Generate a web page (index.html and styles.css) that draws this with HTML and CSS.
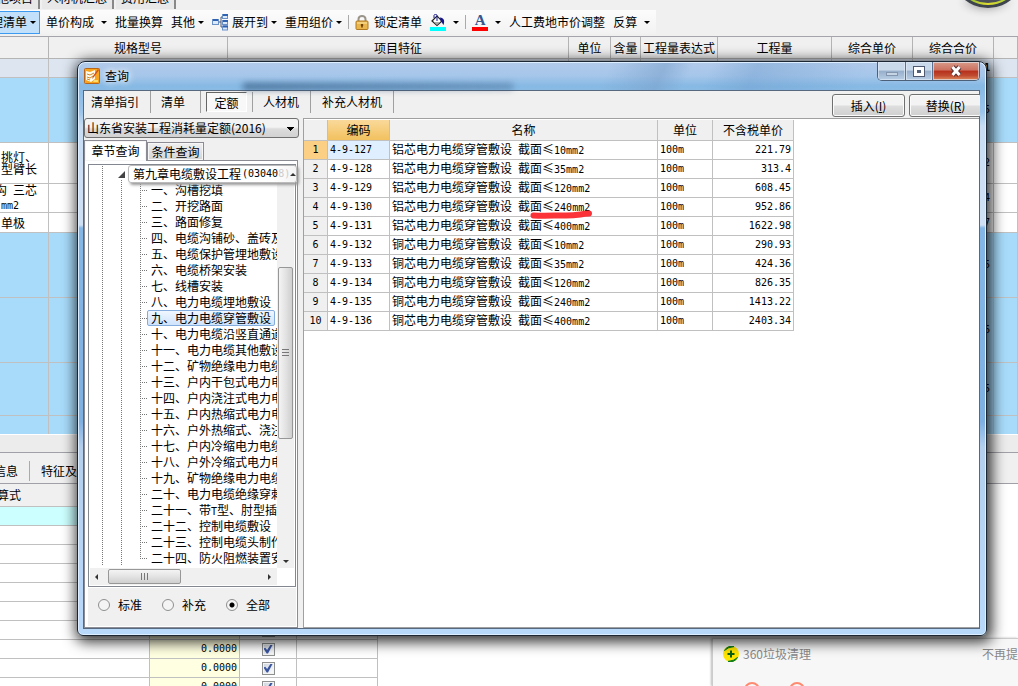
FILE: index.html
```html
<!DOCTYPE html>
<html lang="zh-CN">
<head>
<meta charset="utf-8">
<title>查询</title>
<link rel="stylesheet" href="styles.css">
</head>
<body>
<main class="app">
  <nav class="app-tabs">
    <button class="app-tab">其他项目</button>
    <button class="app-tab">人材机汇总</button>
    <button class="app-tab">费用汇总</button>
  </nav>
  <div class="toolbar">
    <button class="tool tool-on">整理清单<i class="caret"></i></button>
    <button class="tool wide">单价构成<i class="caret"></i></button>
    <button class="tool">批量换算</button>
    <button class="tool">其他<i class="caret"></i></button>
    <button class="tool">
      <svg width="17" height="17" viewBox="0 0 17 17"><path d="M5 8h4M9 3v10M9 3h2M9 13h2" stroke="#556" fill="none"/><g fill="#dbe9fb" stroke="#6a90c8"><rect x=".5" y="5.500" width="6" height="5"/><rect x="10.500" y=".5" width="5" height="4"/><rect x="10.500" y="6.500" width="5" height="4"/><rect x="10.500" y="12" width="5" height="4"/></g><path d="M1 6h5M11 1h5M11 7h5M11 12.500h5" stroke="#2f62b0" stroke-width="2"/></svg>
      展开到<i class="caret"></i></button>
    <button class="tool">重用组价<i class="caret"></i></button>
    <span class="sep"></span>
    <button class="tool lock">
      <svg width="14" height="15" viewBox="0 0 14 15"><path d="M3.500 7V4a3.500 3 0 0 1 7 0v3" fill="none" stroke="#9a9488" stroke-width="2"/><rect x="1" y="6" width="12" height="8.500" rx="1" fill="#e9b54d" stroke="#b07a20"/><path d="M2 8h10" stroke="#ffe9a8"/><path d="M7 9v3.500M5.800 10h2.400" stroke="#6a3d00" stroke-width="1.500"/></svg>
      锁定清单</button>
    <button class="tool wide" aria-label="填充颜色">
      <svg width="16" height="17" viewBox="0 0 16 17"><path d="M2 7l5-5 5 5-5 4.500z" fill="#fff" stroke="#222" stroke-width="1.200"/><path d="M7 7V1.500c0-1.500-3-1.500-3 0V4" fill="none" stroke="#14148c"/><path d="M10 3.500c4 .5 5 3 3.500 7.500-1-1-1.500-3-3-4.500z" fill="#14148c"/><path d="M4 8h6l-3 3z" fill="#aaa"/><rect y="13" width="16" height="4" fill="#00ffff"/></svg><i class="caret"></i></button>
    <span class="sep"></span>
    <button class="tool wide" aria-label="字体颜色"><span class="font-a">A</span><i class="caret"></i></button>
    <button class="tool">人工费地市价调整</button>
    <button class="tool wide">反算<i class="caret"></i></button>
  </div>

  <table class="main-grid">
    <colgroup><col class="w-a"><col class="w-b"><col class="w-c"><col class="w-d"><col class="w-e"><col class="w-f"><col class="w-g"><col class="w-h"><col class="w-h"><col></colgroup>
    <thead><tr><th></th><th>规格型号</th><th>项目特征</th><th>单位</th><th>含量</th><th>工程量表达式</th><th>工程量</th><th>综合单价</th><th>综合合价</th><th></th></tr></thead>
    <tbody>
      <tr class="r19 total"><td></td><td></td><td></td><td></td><td></td><td></td><td></td><td></td><td class="amt">1</td><td></td></tr>
      <tr class="r65 blue"><td></td><td></td><td></td><td></td><td></td><td></td><td></td><td></td><td class="amt">5</td><td></td></tr>
      <tr class="r41"><td class="desc">挑灯、<br>型臂长</td><td></td><td></td><td></td><td></td><td></td><td></td><td></td><td class="amt">2</td><td></td></tr>
      <tr class="r29"><td class="desc cut">沟<span class="num"> </span>三芯<br><span class="num">mm2</span></td><td></td><td></td><td></td><td></td><td></td><td></td><td></td><td class="amt">4</td><td></td></tr>
      <tr class="r20"><td class="desc">单极</td><td></td><td></td><td></td><td></td><td></td><td></td><td></td><td class="amt">7</td><td></td></tr>
      <tr class="r65 blue"><td></td><td></td><td></td><td></td><td></td><td></td><td></td><td></td><td class="amt">5</td><td></td></tr>
      <tr class="r65 blue"><td></td><td></td><td></td><td></td><td></td><td></td><td></td><td></td><td class="amt">6</td><td></td></tr>
      <tr class="r53 blue"><td></td><td></td><td></td><td></td><td></td><td></td><td></td><td></td><td class="amt">5</td><td></td></tr>
      <tr class="r18 blue"><td></td><td></td><td></td><td></td><td></td><td></td><td></td><td></td><td></td><td></td></tr>
    </tbody>
  </table>
  <div class="splitter"></div>
  <nav class="detail-tabs"><button>信息</button><span class="sep"></span><button>特征及内容</button></nav>
  <table class="detail-grid">
    <thead><tr><th>算式</th><th></th><th></th><th></th></tr></thead>
    <tbody>
      <tr class="cyan"><td></td><td></td><td></td><td></td></tr>
      <tr><td></td><td></td><td></td><td></td></tr>
      <tr><td></td><td></td><td></td><td></td></tr>
      <tr><td></td><td></td><td></td><td></td></tr>
      <tr><td></td><td></td><td></td><td></td></tr>
      <tr><td></td><td></td><td></td><td></td></tr>
      <tr><td></td><td>0.0000</td><td><input type="checkbox" checked aria-label="计取"></td><td></td></tr>
      <tr><td></td><td>0.0000</td><td><input type="checkbox" checked aria-label="计取"></td><td></td></tr>
      <tr><td></td><td>0.0000</td><td><input type="checkbox" checked aria-label="计取"></td><td></td></tr>
      <tr><td></td><td>0.0000</td><td><input type="checkbox" checked aria-label="计取"></td><td></td></tr>
    </tbody>
  </table>
</main>

<svg class="gauge" width="100" height="24" viewBox="0 0 100 24"><defs><linearGradient id="g"><stop offset="0" stop-color="#5fae3a"/><stop offset=".5" stop-color="#e0dc30"/><stop offset="1" stop-color="#7fc040"/></linearGradient></defs><circle cx="50" cy="-29" r="37" fill="#3d444e"/><circle cx="50" cy="-29" r="33" fill="#4b5058" stroke="url(#g)" stroke-width="2"/></svg>

<aside class="cleaner">
  <svg width="16" height="16" viewBox="0 0 16 16"><circle cx="8" cy="8" r="8" fill="#ffe600"/><path d="M1.500 4.500A8 8 0 0 1 11 .6Q5 1 1.500 4.500zM14.500 11.500A8 8 0 0 1 5 15.400Q11 15 14.500 11.500z" fill="#0b7d20" stroke="#0b7d20"/><path d="M8 4.500v7M4.500 8h7" stroke="#075f16" stroke-width="2"/></svg>
  <span class="cleaner-name">360垃圾清理</span>
  <a class="cleaner-link" href="#">不再提醒</a>
  <svg class="cleaner-num" width="64" height="16" viewBox="0 0 64 16"><g fill="none" stroke="#ff8a70" stroke-width="2"><circle cx="8" cy="8" r="7"/><circle cx="53" cy="8" r="7"/></g></svg>
</aside>

<section class="dialog" role="dialog" aria-labelledby="dlg-title">
  <header class="titlebar">
    <span class="ghost"></span>
    <svg width="16" height="16" viewBox="0 0 16 16"><rect x=".5" y=".5" width="15" height="15" rx="1" fill="#f7a51c" stroke="#b8641a"/><path d="M2 3l4 1 5-2v9l-4 3-5-2z" fill="#fffbe8"/><path d="M3 6l3 1 4-2M3 9l3 1 3-2M3 11l3 1" stroke="#c88a30" fill="none"/><path d="M14 1L9 8l-1 3 2-2 5-7z" fill="#d0501c"/><path d="M10 12h4v2h-5z" fill="#ffdc70"/></svg>
    <h1 id="dlg-title">查询</h1>
    <div class="win-btns">
      <button class="min" aria-label="最小化"><i></i></button>
      <button class="max" aria-label="最大化"><i></i></button>
      <button class="close" aria-label="关闭"><svg width="14" height="12" viewBox="0 0 14 12"><path d="M3.500 2l7 8M10.500 2l-7 8" stroke="#5a3030" stroke-width="5"/><path d="M3.500 2l7 8M10.500 2l-7 8" stroke="#fff" stroke-width="3"/></svg></button>
    </div>
  </header>
  <div class="client">
    <div class="top">
      <nav class="kinds">
        <button>清单指引</button><button class="roomy">清单</button><button class="on">定额</button><button>人材机</button><button>补充人材机</button>
      </nav>
      <div class="actions">
        <button class="btn">插入(<u>I</u>)</button>
        <button class="btn last">替换(<u>R</u>)</button>
      </div>
    </div>
    <div class="body">
      <div class="side">
        <select class="lib" aria-label="定额库"><option>山东省安装工程消耗量定额(2016)</option></select>
        <nav class="side-tabs"><button class="on">章节查询</button><button>条件查询</button></nav>
        <div class="side-panel">
          <div class="tree-box">
            <div class="tree-row">
              <div class="tree">
                <div class="root"><i class="tri"></i></div>
                <ul>
                  <li>一、沟槽挖填</li><li>二、开挖路面</li><li>三、路面修复</li><li>四、电缆沟铺砂、盖砖及移动盖板</li><li>五、电缆保护管埋地敷设</li><li>六、电缆桥架安装</li><li>七、线槽安装</li><li>八、电力电缆埋地敷设</li><li><span class="sel">九、电力电缆穿管敷设</span></li><li>十、电力电缆沿竖直通道敷设</li><li>十一、电力电缆其他敷设</li><li>十二、矿物绝缘电力电缆敷设</li><li>十三、户内干包式电力电缆头</li><li>十四、户内浇注式电力电缆头</li><li>十五、户内热缩式电力电缆头</li><li>十六、户外热缩式、浇注式</li><li>十七、户内冷缩电力电缆头</li><li>十八、户外冷缩式电力电缆头</li><li>十九、矿物绝缘电力电缆头</li><li>二十、电力电缆绝缘穿刺线夹</li><li>二十一、带<span class="num">T</span>型、肘型插头</li><li>二十二、控制电缆敷设</li><li>二十三、控制电缆头制作</li><li>二十四、防火阻燃装置安装</li>
                </ul>
              </div>
              <div class="vbar"><i class="up"></i><span class="vthumb"></span><i class="down"></i></div>
            </div>
            <div class="hbar"><i class="left"></i><span class="hthumb"></span><i class="right"></i></div>
            <div class="tip">第九章电缆敷设工程<span class="num code">(03040<span class="faint">8)</span></span><i class="up"></i></div>
          </div>
          <div class="scope">
            <label><input type="radio" name="scope">标准</label>
            <label><input type="radio" name="scope">补充</label>
            <label><input type="radio" name="scope" checked>全部</label>
          </div>
        </div>
      </div>
      <div class="result">
        <table class="quota">
          <colgroup><col class="q-n"><col class="q-code"><col class="q-name"><col class="q-unit"><col class="q-price"></colgroup>
          <thead><tr><th></th><th class="hot">编码</th><th>名称</th><th>单位</th><th>不含税单价</th></tr></thead>
          <tbody>
            <tr class="cur"><th>1</th><td>4-9-127</td><td class="name">铝芯电力电缆穿管敷设<span class="num"> </span>截面≤<span class="num">10mm2</span></td><td>100m</td><td>221.79</td></tr>
            <tr><th>2</th><td>4-9-128</td><td class="name">铝芯电力电缆穿管敷设<span class="num"> </span>截面≤<span class="num">35mm2</span></td><td>100m</td><td>313.4</td></tr>
            <tr><th>3</th><td>4-9-129</td><td class="name">铝芯电力电缆穿管敷设<span class="num"> </span>截面≤<span class="num">120mm2</span></td><td>100m</td><td>608.45</td></tr>
            <tr><th>4</th><td>4-9-130</td><td class="name">铝芯电力电缆穿管敷设<span class="num"> </span>截<span class="marked">面≤<span class="num">240mm2</span><svg class="mark" viewBox="0 0 63 9" preserveAspectRatio="none"><path d="M3.500 5.500C14 6 24 5.500 36 5.500S50 4 59 3.500" fill="none" stroke="#fb3238" stroke-width="6" stroke-linecap="round"/></svg></span></td><td>100m</td><td>952.86</td></tr>
            <tr><th>5</th><td>4-9-131</td><td class="name">铝芯电力电缆穿管敷设<span class="num"> </span>截面≤<span class="num">400mm2</span></td><td>100m</td><td>1622.98</td></tr>
            <tr><th>6</th><td>4-9-132</td><td class="name">铜芯电力电缆穿管敷设<span class="num"> </span>截面≤<span class="num">10mm2</span></td><td>100m</td><td>290.93</td></tr>
            <tr><th>7</th><td>4-9-133</td><td class="name">铜芯电力电缆穿管敷设<span class="num"> </span>截面≤<span class="num">35mm2</span></td><td>100m</td><td>424.36</td></tr>
            <tr><th>8</th><td>4-9-134</td><td class="name">铜芯电力电缆穿管敷设<span class="num"> </span>截面≤<span class="num">120mm2</span></td><td>100m</td><td>826.35</td></tr>
            <tr><th>9</th><td>4-9-135</td><td class="name">铜芯电力电缆穿管敷设<span class="num"> </span>截面≤<span class="num">240mm2</span></td><td>100m</td><td>1413.22</td></tr>
            <tr><th>10</th><td>4-9-136</td><td class="name">铜芯电力电缆穿管敷设<span class="num"> </span>截面≤<span class="num">400mm2</span></td><td>100m</td><td>2403.34</td></tr>
          </tbody>
        </table>
      </div>
    </div>
  </div>
</section>
</body>
</html>
```
FILE: styles.css
```css
* { box-sizing: border-box; }
html, body { height: 100%; }
body {
  margin: 0;
  position: relative;
  overflow: hidden;
  background: #fff;
  color: #000;
  font: 12px/16px "Noto Sans CJK SC", sans-serif;
}
button, select, input { font: inherit; color: inherit; margin: 0; padding: 0; }
button { background: none; border: 0; white-space: nowrap; }
svg { display: block; flex: none; }
.num { font-family: "DejaVu Sans Mono", monospace; font-size: 10px; white-space: pre; }
.sep { width: 1px; height: 14px; background: #aaa; flex: none; }

/* application behind the dialog */
.app { height: 100%; overflow: hidden; display: flex; flex-direction: column; }
.app > * { flex: none; }
.app-tabs { display: flex; height: 10px; background: #f0f0f0; overflow: hidden; }
.app-tab { height: 9px; padding: 0 5px 3px; display: flex; align-items: flex-end; justify-content: center; margin-right: 2px; border-right: 2px solid #888; background: #e8e8e8; }
.app-tab:first-child { margin-left: -20px; }
.toolbar {
  display: flex; align-items: center; gap: 8px; height: 27px; padding-bottom: 2px;
  border-bottom: 1px solid #a4a4ac;
  background: linear-gradient(#fcfcfc, #f2f2f2) 0 0 / 656px 24px no-repeat, #f0f0f0;
}
.tool { display: flex; align-items: center; gap: 3px; height: 23px; }
.tool.wide { gap: 7px; }
.tool.lock { gap: 5px; }
.tool-on { margin: 0 -2px 0 -26px; padding: 0 3px 0 4px; border: 1px solid #3c9bf0; background: #c3e0fb; }
.toolbar .sep { margin: 0 -2px; }
.caret { border: 3px solid transparent; border-top-color: #000; border-bottom: 0; }
.font-a { width: 16px; height: 17px; border-bottom: 4px solid #f00; font: bold 15px/13px "Liberation Serif", serif; color: #34568f; text-align: center; }

table { border-collapse: separate; border-spacing: 0; table-layout: fixed; }
th { font-weight: 400; }
th, td { padding: 0; white-space: nowrap; overflow: hidden; border: solid #c0c0c0; border-width: 0 1px 1px 0; }
.main-grid { width: 100%; }
.w-a { width: 49px; } .w-b { width: 179px; } .w-c { width: 341px; } .w-d { width: 42px; }
.w-e { width: 30px; } .w-f { width: 77px; } .w-g { width: 114px; } .w-h { width: 81px; }
.main-grid th { height: 22px; background: #f0f0f0; border-color: #b4b4b4; line-height: 16px; }
.r18 td { height: 18px; border-bottom: 0; }
.r19 td { height: 19px; } .r20 td { height: 20px; } .r29 td { height: 29px; }
.r41 td { height: 41px; } .r53 td { height: 53px; } .r65 td { height: 65px; }
.total td { background: #dde5f0; }
.total .amt { font-weight: 700; }
.blue td { background: #a8dbfa; }
.desc { padding-left: 1px; line-height: 12px; }
.desc.cut { text-indent: -6px; }
.desc.cut .num { line-height: 12px; }
.amt { text-align: right; padding-right: 3px; font-family: "DejaVu Sans Mono", monospace; font-size: 10px; }
.splitter { height: 19px; background: #ececec; border-top: 1px solid #fff; border-bottom: 1px solid #a0a0a8; }
.detail-tabs { display: flex; align-items: center; gap: 11px; height: 31px; padding-top: 5px; background: #f0f0f0; border-bottom: 1px solid #a0a0a8; }
.detail-tabs button:first-child { margin-left: -6px; }
.detail-tabs .sep { height: 20px; }
.detail-grid { width: 378px; }
.detail-grid th:first-child { width: 150px; text-align: left; text-indent: -3px; }
.detail-grid th:nth-child(2) { width: 90px; }
.detail-grid th:nth-child(3) { width: 57px; }
.detail-grid th { height: 23px; background: #f0f0f0; }
.detail-grid td { height: 19px; line-height: 16px; }
.detail-grid td:nth-child(2) { background: #ffffe1; text-align: right; padding-right: 2px; font-family: "DejaVu Sans Mono", monospace; font-size: 10px; }
.detail-grid td:nth-child(3) { text-align: center; }
.detail-grid .cyan td { background: #ccffff; }
.detail-grid input { appearance: none; display: block; width: 13px; height: 13px; margin: 0 auto; border: 1px solid #8e8f8f; background: linear-gradient(135deg, #ccd3dc, #fff); box-shadow: inset 0 0 0 1px #f4f4f4; }
.detail-grid input::before { content: ""; display: block; width: 9px; height: 9px; margin: 1px; background: #3a55a0; clip-path: polygon(0 45%, 20% 35%, 40% 60%, 80% 0, 100% 5%, 50% 100%, 35% 100%); }

.gauge { position: absolute; top: 0; right: -20px; filter: drop-shadow(-2px 0 5px #888); }
.cleaner {
  position: absolute; left: 712px; right: 0; bottom: 0; height: 48px;
  display: grid; grid-template-columns: 16px auto 1fr; column-gap: 4px; align-content: start;
  padding: 7px 0 0 10px; overflow: hidden;
  background: #f7f7f7; border: solid #ccc; border-width: 1px 0 0 1px; box-shadow: -1px 0 2px #bbb; color: #888;
}
.cleaner-link { justify-self: end; margin-right: -12px; color: #888; text-decoration: none; }
.cleaner-num { grid-column: 1 / -1; margin: 20px 0 0 21px; }

/* dialog */
.dialog {
  position: absolute; left: 77px; right: 31px; top: 61px; bottom: 50px;
  display: flex; flex-direction: column; padding: 0 6px 6px 5px;
  border: 1px solid #1c2733; border-radius: 8px 8px 6px 6px;
  background: linear-gradient(#b2caea 0, #a5c6ea 14px, #86b9e4 24px, #9cc4ea 50px, #c8ddf4 64px, #cfe0f4 163px, #84b6e6 166px, #7fb0e2 360px, #b4cfee 385px, #b9d9fb 100%);
  box-shadow: inset 0 0 0 1px #dceeff, 2px 3px 14px 3px rgba(0, 0, 0, .8);
}
.titlebar { position: relative; display: flex; align-items: center; gap: 5px; height: 28px; flex: none; padding-left: 1px; }
.titlebar::before { content: ""; position: absolute; inset: 1px -5px 0; background: linear-gradient(115deg, transparent 58%, #789fca88 64%, transparent 67%, transparent 69%, #6d9bcc66 74%, transparent 86%); }
.titlebar h1 { margin: 0; font-size: 12px; font-weight: 400; line-height: 16px; text-shadow: 0 0 6px #fff, 0 0 8px #fff; position: relative; }
.titlebar > svg { position: relative; }
.ghost { position: absolute; left: 160px; width: 270px; bottom: 0; height: 7px; background: linear-gradient(90deg, #25456a99, #25456a55); filter: blur(3px); }
.win-btns { position: relative; align-self: flex-start; margin-left: auto; display: flex; height: 19px; border: 1px solid #4d6079; border-top: 0; border-radius: 0 0 5px 5px; overflow: hidden; }
.win-btns button { display: flex; align-items: center; justify-content: center; width: 27px; border-right: 1px solid #5d7290; background: linear-gradient(#cbdaeb 0 45%, #97aecb 50%, #b9cfe6); box-shadow: inset 0 0 0 1px #dfeaf6aa; }
.win-btns .min { width: 28px; }
.win-btns .close { width: 46px; border: 0; background: linear-gradient(#d99a88 0, #cc7261 45%, #b7301b 50%, #c04a30 75%, #dd8a5c); }
.min i { width: 12px; height: 4px; border: 1px solid #8496ad; background: #c6d5e6; margin-top: 6px; }
.max i { width: 10px; height: 9px; border: 3px solid #fff; outline: 1px solid #4f5a70; background: #52607a; }

.client { flex: 1; min-height: 0; display: flex; flex-direction: column; background: #f0f0f0; border: 1px solid #57697e; }
.top { display: flex; justify-content: space-between; height: 27px; flex: none; }
.kinds { display: flex; align-items: flex-start; overflow: hidden; }
.kinds button { height: 22px; padding: 0 11px; border-right: 1px solid #a0a0a0; }
.kinds button:first-child { padding-left: 7px; }
.kinds .roomy { padding-right: 15px; padding-left: 10px; }
.kinds .on { width: 41px; height: 20px; margin: 1px 5px 0; padding: 1px 0 0; border: 1px solid #fff; border-top-color: #666; border-left-color: #666; box-shadow: 5px 0 0 #f0f0f0, 6px 0 0 #a0a0a0; background: #f8f8f8; }
.actions { display: flex; gap: 4px; padding-top: 3px; overflow: hidden; margin-right: -1px; }
.btn { width: 73px; height: 23px; border: 1px solid #707070; border-radius: 3px; background: linear-gradient(#f3f3f3 0 48%, #dedede 52%, #cfcfcf); box-shadow: inset 0 0 0 1px #fbfbfb; }
.btn.last { margin-right: -2px; }

.body { flex: 1; min-height: 0; display: flex; gap: 4px; }
.side { width: 215px; flex: none; display: flex; flex-direction: column; }
.lib {
  appearance: none; height: 20px; padding: 0 2px; border: 1px solid #707070; border-radius: 3px; line-height: 16px;
  background: linear-gradient(#000, #000) 202px 8px / 7px 1px no-repeat, linear-gradient(#000, #000) 203px 9px / 5px 1px no-repeat, linear-gradient(#000, #000) 204px 10px / 3px 1px no-repeat, linear-gradient(#000, #000) 205px 11px / 1px 1px no-repeat, linear-gradient(#f3f3f3 45%, #dcdcdc 55%, #d2d2d2);
}
.side-tabs { display: flex; align-items: flex-end; height: 22px; flex: none; }
.side-tabs button { width: 57px; height: 18px; border: 1px solid #8c8c94; border-bottom: 0; background: linear-gradient(#f0f0f0, #d4d4d4); box-shadow: inset 0 0 0 1px #f6f6f6; line-height: 16px; }
.side-tabs .on { position: relative; width: 63px; height: 21px; margin-bottom: -1px; background: #fff; }
.side-panel { flex: 1; min-height: 0; margin-right: 1px; display: flex; flex-direction: column; border: 1px solid #8c8c94; background: #fff; padding: 3px 1px 1px 3px; }
.tree-box { position: relative; flex: 1; min-height: 0; display: flex; flex-direction: column; border: 1px solid #828790; padding: 1px; }
.tree-row { flex: 1; min-height: 0; display: flex; }
.tree {
  flex: 1; min-width: 0; overflow: hidden;
  background:
    repeating-linear-gradient(#777 0 1px, transparent 1px 2px) 12px 0 / 1px 400px no-repeat,
    repeating-linear-gradient(#777 0 1px, transparent 1px 2px) 31px 14px / 1px 386px no-repeat;
}
.root { height: 16px; padding: 5px 0 0 28px; }
.tri { display: block; width: 7px; height: 7px; background: #444; clip-path: polygon(100% 0, 100% 100%, 0 100%); }
.tree ul { list-style: none; margin: 0 0 0 50px; padding: 0; background: repeating-linear-gradient(#777 0 1px, transparent 1px 2px) 0 0 / 1px 376px no-repeat; }
.tree li { height: 16px; padding-left: 11px; white-space: nowrap; background: repeating-linear-gradient(90deg, #777 0 1px, transparent 1px 2px) 0 8px / 8px 1px no-repeat; }
.sel { display: inline-block; height: 16px; line-height: 14px; margin-left: -4px; padding: 0 3px; border: 1px solid #84acdd; border-radius: 2px; background: linear-gradient(#f0f6fe, #cfe3fc); vertical-align: top; }
.vbar { width: 17px; flex: none; display: flex; flex-direction: column; align-items: center; background: #f0f0f0; padding: 7px 0 5px; }
.vbar i, .hbar i { border: 3px solid transparent; }
.vbar .up { border-bottom-color: #333; border-top: 0; }
.vbar .down { border-top-color: #333; border-bottom: 0; margin-top: auto; }
.vthumb { width: 15px; height: 172px; margin-top: 91px; border: 1px solid #979797; border-radius: 2px; background: repeating-linear-gradient(#777 0 1px, transparent 1px 3px) center / 7px 8px no-repeat, linear-gradient(90deg, #f4f4f4, #e3e3e3 50%, #cfcfcf); }
.hbar { display: flex; align-items: center; height: 17px; margin-right: 17px; background: #f0f0f0; padding: 0 6px 0 3px; }
.hbar .left { border-right-color: #333; border-left: 0; margin: 0 10px 0 2px; }
.hbar .right { border-left-color: #333; border-right: 0; margin-left: auto; }
.hthumb { width: 73px; height: 15px; border: 1px solid #979797; border-radius: 2px; background: repeating-linear-gradient(90deg, #777 0 1px, transparent 1px 3px) center / 8px 7px no-repeat, linear-gradient(#f4f4f4, #e3e3e3 50%, #cfcfcf); }
.tip { position: absolute; left: 39px; right: -2px; top: 0; height: 18px; display: flex; align-items: center; padding: 0 8px 0 4px; white-space: nowrap; border: 1px solid #bbb; border-radius: 3px; background: linear-gradient(90deg, #fff 85%, #f4f4f4); box-shadow: 2px 2px 3px #999; }
.tip .code { padding-left: 1px; }
.tip .up { border: 3px solid transparent; border-bottom-color: #333; border-top: 0; margin-left: auto; }
.faint { color: #ccc; }
.scope { display: flex; align-items: center; gap: 15px; height: 38px; flex: none; padding: 0 0 4px 10px; background: #f0f0f0; margin-top: 1px; }
.scope label { display: flex; align-items: center; gap: 8px; width: 49px; white-space: nowrap; }
.scope input { appearance: none; width: 12px; height: 12px; border: 1px solid #8e8f8f; border-radius: 50%; background: #f4f4f4; }
.scope input:checked { background: radial-gradient(circle, #000 0 2px, #f4f4f4 3px); }

.result { flex: 1; min-width: 0; background: #fff; border: 1px solid #a0a0a0; border-right: 0; padding-top: 1px; }
.quota { width: 490px; }
.q-n { width: 24px; } .q-code { width: 62px; } .q-name { width: 268px; } .q-unit { width: 55px; } .q-price { width: 81px; }
.quota th { background: #f0f0f0; }
.quota thead th { height: 21px; line-height: 16px; }
.quota .hot { background: linear-gradient(#f9d99a, #f2c15f); }
.quota tbody th, .quota td { height: 19px; line-height: 16px; font-family: "DejaVu Sans Mono", monospace; font-size: 10px; }
.quota td { padding-left: 2px; }
.quota .name { font: 12px/16px "Noto Sans CJK SC", sans-serif; overflow: visible; }
.quota td:last-child { text-align: right; padding-right: 2px; }
.quota .cur th { background: #fcd084; }
.cur td:nth-child(2) { background: #dfefff; }
.marked { position: relative; }
.mark { position: absolute; left: 0; top: 13px; width: 63px; height: 9px; }
```
